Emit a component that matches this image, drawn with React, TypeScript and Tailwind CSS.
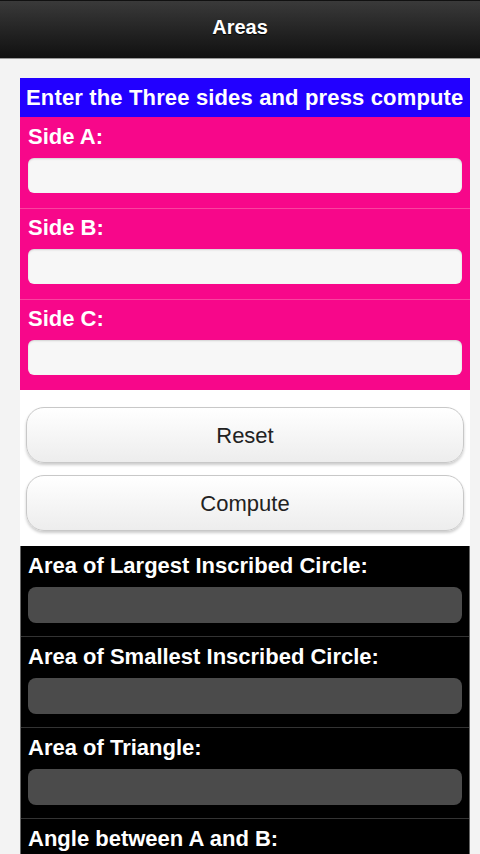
import React from 'react';

const sides = ['Side A:', 'Side B:', 'Side C:'];
const results = [
  'Area of Largest Inscribed Circle:',
  'Area of Smallest Inscribed Circle:',
  'Area of Triangle:',
  'Angle between A and B:',
];

export default function App() {
  return (
    <div className="min-h-screen bg-[#f3f3f3] font-['Liberation_Sans',Arial,sans-serif]">
      {/* Header */}
      <header className="h-[58px] pb-[5px] flex items-center justify-center border-t border-[#111] bg-gradient-to-b from-[#3a3a3a] to-[#111111] shadow-[0_1px_0_#999]">
        <h1 className="text-[20px] font-bold text-white [text-shadow:0_1px_1px_#000]">Areas</h1>
      </header>

      <main className="pt-[20px] pl-[20px] pr-[10px]">
        <div className="bg-white">
          {/* Inputs */}
          <div className="h-[39px] flex items-center px-[6px] bg-[#2200ff]">
            <p className="text-[22px] font-bold text-white whitespace-nowrap tracking-[0.15px]">
              Enter the Three sides and press compute
            </p>
          </div>
          <div className="bg-[#f7078a]">
            {sides.map((label, i) => (
              <div
                key={label}
                className={`px-[8px] pb-[15px] ${i > 0 ? 'pt-[8px] border-t border-[#f8449f]' : 'pt-[9px]'}`}
              >
                <label className="block h-[22px] leading-[22px] text-[22px] font-bold text-white">{label}</label>
                <input
                  type="text"
                  className="mt-[10px] block w-full h-[35px] rounded-[6px] bg-[#f7f7f7] shadow-[inset_0_1px_2px_rgba(0,0,0,0.15)] outline-none"
                />
              </div>
            ))}
          </div>

          {/* Buttons */}
          <div className="pt-[17px] pb-[15px] px-[6px] flex flex-col gap-[12px]">
            {['Reset', 'Compute'].map((b) => (
              <button
                key={b}
                className="h-[56px] rounded-[18px] border border-[#c8c8c8] bg-gradient-to-b from-white to-[#ededed] shadow-[0_2px_3px_rgba(0,0,0,0.2)] text-[22px] text-[#222]"
              >
                {b}
              </button>
            ))}
          </div>

          {/* Results */}
          <div className="bg-black border-x border-[#666]">
            {results.map((label, i) => (
              <div
                key={label}
                className={`px-[7px] pt-[9px] pb-[13px] ${i > 0 ? 'border-t border-[#333]' : ''}`}
              >
                <label className="block h-[22px] leading-[22px] text-[22px] font-bold text-white whitespace-nowrap">{label}</label>
                <input
                  type="text"
                  readOnly
                  className="mt-[10px] block w-full h-[36px] rounded-[8px] bg-[#4b4b4b] outline-none"
                />
              </div>
            ))}
          </div>
        </div>
      </main>
    </div>
  );
}
